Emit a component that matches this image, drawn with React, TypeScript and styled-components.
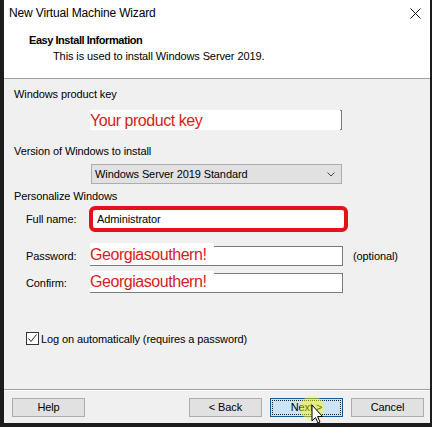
import React from 'react';
import styled, { createGlobalStyle } from 'styled-components';

const GlobalStyle = createGlobalStyle`
  html, body {
    margin: 0;
    padding: 0;
    background: #1c1c1c;
  }
  body {
    font-family: 'Liberation Sans', Arial, sans-serif;
    font-size: 11px;
    letter-spacing: -0.1px;
    color: #000;
  }
`;

const Window = styled.div`
  position: relative;
  margin-left: 4px;
  width: 426px;
  height: 423px;
  background: #f0f0f0;
  display: flex;
  flex-direction: column;
`;

const Header = styled.div`
  background: #fff;
  height: 79px;
  border-bottom: 1px solid #a0a0a0;
  box-sizing: border-box;
`;

const TitleBar = styled.div`
  height: 26px;
  display: flex;
  align-items: center;
  justify-content: space-between;
  padding: 0 9px 0 5px;
  font-size: 12px;
  letter-spacing: -0.15px;
`;

const Heading = styled.div`
  margin: 7px 0 0 25px;
  font-weight: bold;
  letter-spacing: -0.45px;
  line-height: 15px;
`;

const SubHeading = styled.div`
  margin: 1px 0 0 49px;
  line-height: 15px;
`;

const Body = styled.div`
  flex: 1;
  display: flex;
  flex-direction: column;
  padding-top: 8px;
`;

const SectionLabel = styled.div<{ $gap: number }>`
  margin: ${(p) => p.$gap}px 0 0 10px;
  line-height: 15px;
`;

const Row = styled.div<{ $gap: number }>`
  display: flex;
  align-items: center;
  margin-top: ${(p) => p.$gap}px;
`;

const FieldLabel = styled.div`
  width: 64px;
  margin-left: 22px;
  line-height: 15px;
`;

const Indent = styled.div`
  width: 86px;
  flex: none;
`;

const TextBox = styled.div<{ $w?: number }>`
  position: relative;
  width: ${(p) => p.$w ?? 252}px;
  height: 20px;
  box-sizing: border-box;
  background: #fff;
  border: 1px solid #7a7a7a;
`;

const Scribble = styled.div<{ $top: number; $w: number; $h: number }>`
  position: absolute;
  left: -1px;
  top: ${(p) => p.$top}px;
  width: ${(p) => p.$w}px;
  height: ${(p) => p.$h}px;
  background: #fff;
  color: #d41c1c;
  font-size: 16px;
  letter-spacing: -0.45px;
  line-height: ${(p) => p.$h + 1}px;
  white-space: nowrap;
`;

const Select = styled.div`
  margin-left: 1px;
  width: 251px;
  height: 20px;
  box-sizing: border-box;
  background: #e1e1e1;
  border: 1px solid #adadad;
  display: flex;
  align-items: center;
  justify-content: space-between;
  padding: 0 6px 0 3px;
`;

const Highlight = styled.div`
  margin-left: -1px;
  width: 259px;
  height: 26px;
  box-sizing: border-box;
  border: 4px solid #e3121b;
  border-radius: 6px;
  background: #fff;
  display: flex;
  align-items: center;
  padding-left: 4px;
`;

const Hint = styled.div`
  margin-left: 10px;
`;

const CheckRow = styled.label`
  display: flex;
  align-items: center;
  margin: 39px 0 0 22px;
  gap: 2px;
`;

const CheckBox = styled.span`
  width: 13px;
  height: 13px;
  box-sizing: border-box;
  border: 1px solid #333;
  background: #fff;
  display: flex;
  align-items: center;
  justify-content: center;
`;

const Footer = styled.div`
  border-top: 1px solid #a0a0a0;
  box-shadow: inset 0 1px 0 #fff;
  height: 34px;
  box-sizing: border-box;
  display: flex;
  padding: 8px 6px 0 8px;
  gap: 8px;
`;

const Spacer = styled.div`
  flex: 1;
`;

const Button = styled.div<{ $primary?: boolean }>`
  position: relative;
  width: 73px;
  height: 19px;
  box-sizing: border-box;
  border: 1px solid ${(p) => (p.$primary ? '#0f5a9c' : '#adadad')};
  background: ${(p) => (p.$primary ? '#cce4f7' : '#e1e1e1')};
  display: flex;
  align-items: center;
  justify-content: center;
  line-height: 15px;
`;

const FocusRing = styled.div`
  position: absolute;
  inset: 1px;
  border: 1px dotted #222;
`;

const Cursor = styled.svg`
  position: absolute;
  left: 29px;
  top: -2px;
  overflow: visible;
`;

const CloseIcon = () => (
  <svg width="11" height="11" viewBox="0 0 11 11">
    <path d="M0.5 0.5L10.5 10.5M10.5 0.5L0.5 10.5" stroke="#111" strokeWidth="1" fill="none" />
  </svg>
);

const Chevron = () => (
  <svg width="8" height="5" viewBox="0 0 8 5">
    <path d="M0.5 0.5L4 4L7.5 0.5" stroke="#444" strokeWidth="1" fill="none" />
  </svg>
);

const App: React.FC = () => {
  return (
    <>
      <GlobalStyle />
      <Window>
        <Header>
          <TitleBar>
            <span>New Virtual Machine Wizard</span>
            <CloseIcon />
          </TitleBar>
          <Heading>Easy Install Information</Heading>
          <SubHeading>This is used to install Windows Server 2019.</SubHeading>
        </Header>
        <Body>
          <SectionLabel $gap={0}>Windows product key</SectionLabel>
          <Row $gap={8}>
            <Indent />
            <TextBox>
              <Scribble $top={-1} $w={250} $h={20}>
                Your product key
              </Scribble>
            </TextBox>
          </Row>
          <SectionLabel $gap={14}>Version of Windows to install</SectionLabel>
          <Row $gap={5}>
            <Indent />
            <Select>
              <span>Windows Server 2019 Standard</span>
              <Chevron />
            </Select>
          </Row>
          <SectionLabel $gap={5}>Personalize Windows</SectionLabel>
          <Row $gap={2}>
            <FieldLabel>Full name:</FieldLabel>
            <Highlight>Administrator</Highlight>
          </Row>
          <Row $gap={14}>
            <FieldLabel>Password:</FieldLabel>
            <TextBox $w={253}>
              <Scribble $top={-4} $w={124} $h={22}>
                Georgiasouthern!
              </Scribble>
            </TextBox>
            <Hint>(optional)</Hint>
          </Row>
          <Row $gap={7}>
            <FieldLabel>Confirm:</FieldLabel>
            <TextBox $w={253}>
              <Scribble $top={-3} $w={124} $h={21}>
                Georgiasouthern!
              </Scribble>
            </TextBox>
          </Row>
          <CheckRow>
            <CheckBox>
              <svg width="11" height="11" viewBox="0 0 11 11">
                <path d="M1.5 5.5L4 8.5L9.5 1.5" stroke="#222" strokeWidth="1" fill="none" />
              </svg>
            </CheckBox>
            <span>Log on automatically (requires a password)</span>
          </CheckRow>
        </Body>
        <Footer>
          <Button>Help</Button>
          <Spacer />
          <Button>&lt; Back</Button>
          <Button $primary>
            <FocusRing />
            Next &gt;
            <Cursor width="30" height="40" viewBox="0 0 30 40">
              <circle cx="12" cy="11" r="12" fill="rgba(255,250,0,0.45)" />
              <path
                d="M12 8 L12 24 L15.5 20.5 L18 26 L20 25 L17.6 19.6 L22.5 19.5 Z"
                fill="#fff"
                stroke="#000"
                strokeWidth="1"
                strokeLinejoin="round"
              />
            </Cursor>
          </Button>
          <Button>Cancel</Button>
        </Footer>
      </Window>
    </>
  );
};

export default App;
